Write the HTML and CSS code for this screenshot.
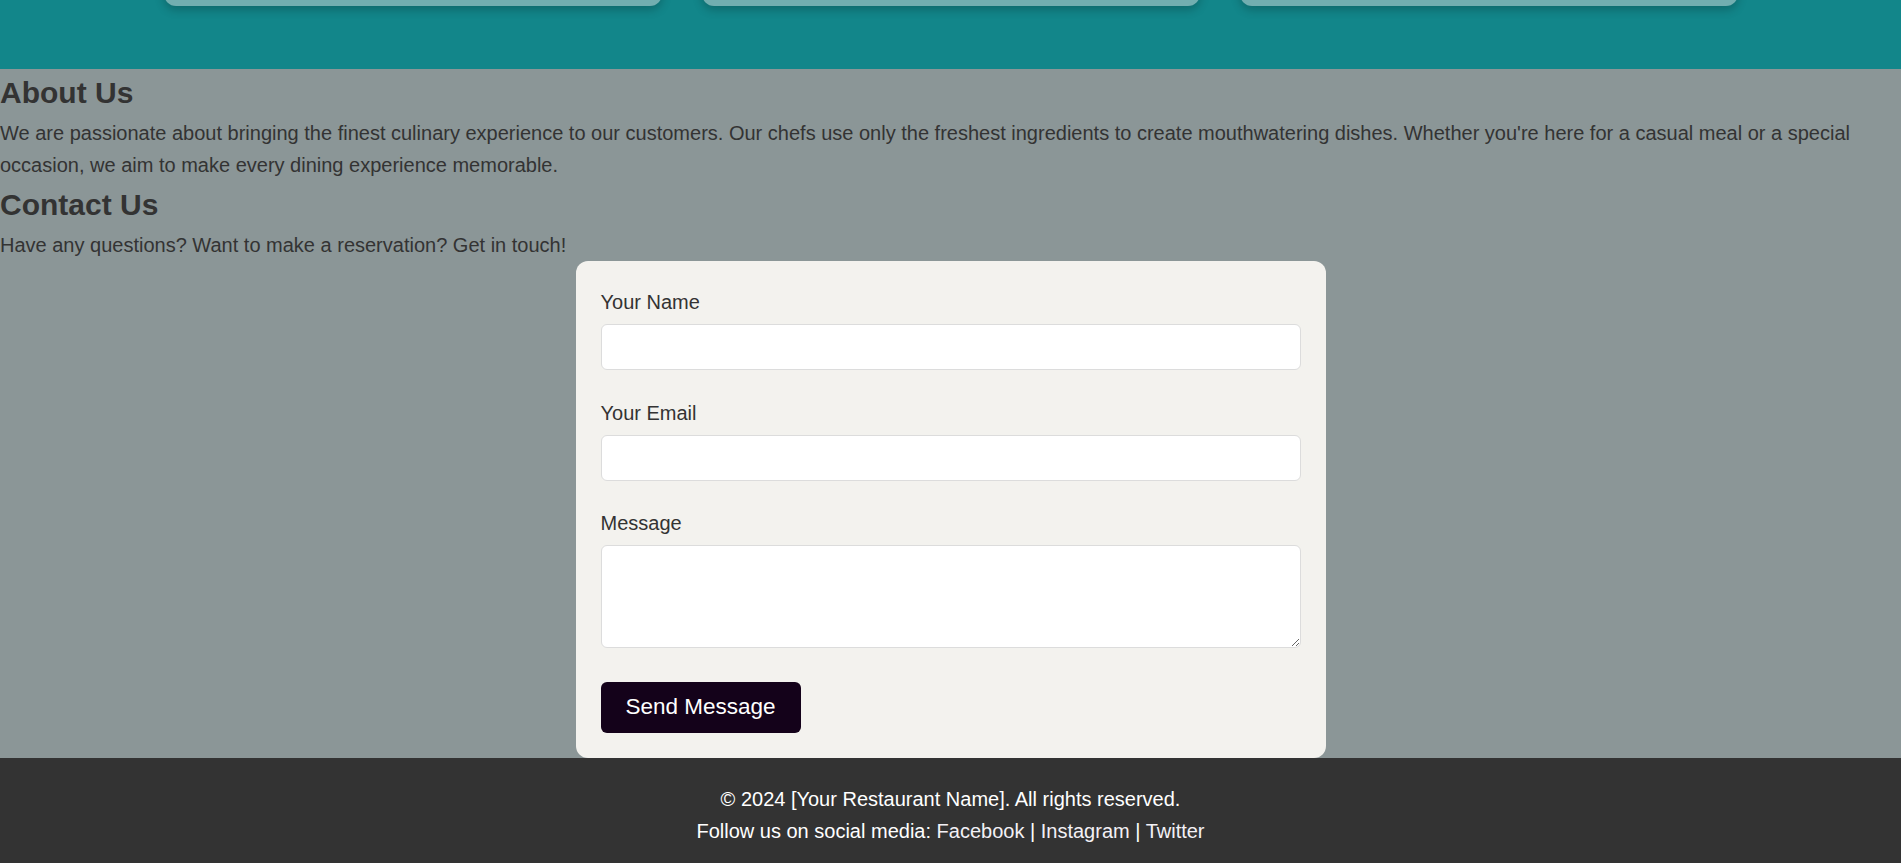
FILE: index.html
```html
<!DOCTYPE html>
<html lang="en">
<head>
<meta charset="utf-8">
<title>Restaurant</title>
<link rel="stylesheet" href="styles.css">
</head>
<body>
<section class="hero">
  <div class="cards">
    <div class="card"></div>
    <div class="card"></div>
    <div class="card"></div>
  </div>
</section>

<section class="about">
  <h2>About Us</h2>
  <p>We are passionate about bringing the finest culinary experience to our customers. Our chefs use only the freshest ingredients to create mouthwatering dishes. Whether you're here for a casual meal or a special occasion, we aim to make every dining experience memorable.</p>
</section>

<section class="contact">
  <h2>Contact Us</h2>
  <p>Have any questions? Want to make a reservation? Get in touch!</p>
  <form class="contact-form">
    <div class="form-group">
      <label for="name">Your Name</label>
      <input type="text" id="name" class="field">
    </div>
    <div class="form-group">
      <label for="email">Your Email</label>
      <input type="email" id="email" class="field">
    </div>
    <div class="form-group form-group-last">
      <label for="message">Message</label>
      <textarea id="message" class="field field-area"></textarea>
    </div>
    <button type="button" class="send-btn">Send Message</button>
  </form>
</section>

<footer class="site-footer">
  <p>&copy; 2024 [Your Restaurant Name]. All rights reserved.</p>
  <p>Follow us on social media: <a href="#">Facebook</a> | <a href="#">Instagram</a> | <a href="#">Twitter</a></p>
</footer>
</body>
</html>
```

FILE: styles.css
```css
body {
  margin: 0;
  font-family: "Liberation Sans", Arial, sans-serif;
  font-size: 20px;
  line-height: 1.6;
  color: #333333;
  background: #8b9697;
}

.hero {
  background: #12868a;
  padding: 0 0 63px;
}

.cards {
  display: grid;
  grid-template-columns: repeat(3, 1fr);
  gap: 40px;
  width: 1574px;
  margin: 0 auto;
}

.card {
  height: 40px;
  margin-top: -34px;
  background: #72aeb0;
  border-radius: 12px;
  box-shadow: 0 4px 10px rgba(0, 0, 0, 0.22);
}

h2 {
  margin: 0;
  font-size: 30px;
  line-height: 48px;
  color: #333333;
}

p {
  margin: 0;
}

.contact-form {
  box-sizing: border-box;
  width: 750px;
  margin: 0 auto;
  padding: 25px;
  background: #f3f2ee;
  border-radius: 12px;
}

.form-group {
  margin-bottom: 26.5px;
}

.form-group-last {
  margin-bottom: 34.5px;
}

.form-group label {
  display: block;
  margin-bottom: 6px;
  color: #333333;
}

.field {
  display: block;
  box-sizing: border-box;
  width: 100%;
  height: 46px;
  margin: 0;
  padding: 12px;
  border: 1px solid #dcdcdc;
  border-radius: 6px;
  background: #ffffff;
  font-family: inherit;
  font-size: 16px;
}

.field-area {
  height: 102.5px;
  resize: vertical;
}

.send-btn {
  display: block;
  box-sizing: border-box;
  height: 51px;
  padding: 0 25px;
  border: none;
  border-radius: 6px;
  background: #14021a;
  color: #ffffff;
  font-family: inherit;
  font-size: 22.5px;
  line-height: 1;
  white-space: nowrap;
}

.site-footer {
  background: #333333;
  color: #ffffff;
  text-align: center;
  padding: 25px 0;
}

.site-footer a {
  color: #f3f1f6;
  text-decoration: none;
}
```
